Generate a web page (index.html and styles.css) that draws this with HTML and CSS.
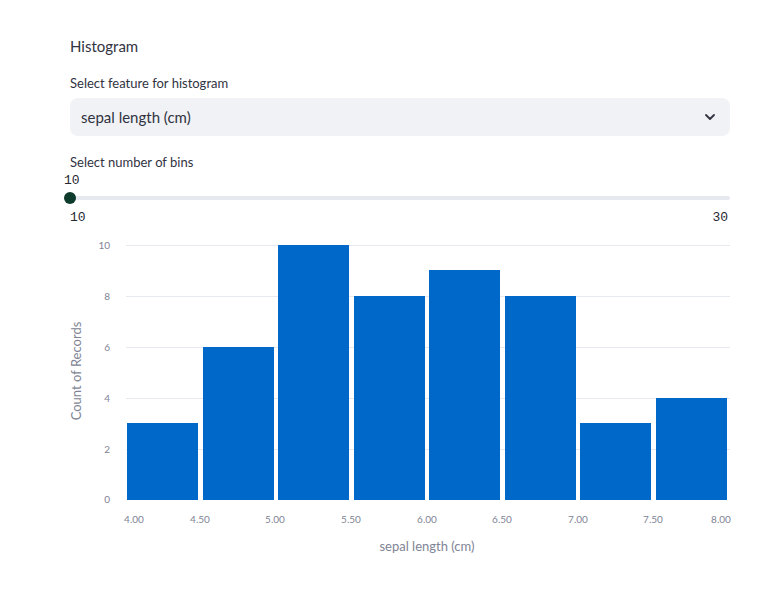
FILE: index.html
```html
<!DOCTYPE html>
<html>
<head>
<meta charset="utf-8">
<link rel="stylesheet" href="styles.css">
</head>
<body>
<main class="block">
  <div class="heading">Histogram</div>
  <div class="field">
    <div class="label">Select feature for histogram</div>
    <div class="select">
      <span>sepal length (cm)</span>
      <svg class="chev" width="12" height="8" viewBox="0 0 12 8"><path d="M2 2 L6 6 L10 2" fill="none" stroke="#31333f" stroke-width="1.8" stroke-linecap="round" stroke-linejoin="round"/></svg>
    </div>
  </div>
  <div class="field slider-field">
    <div class="label">Select number of bins</div>
    <div class="slider">
      <div class="value">10</div>
      <div class="track"><div class="thumb"></div></div>
      <div class="ends"><span>10</span><span>30</span></div>
    </div>
  </div>
  <svg class="chart" width="660" height="330" viewBox="0 0 660 330">
    <g class="grid" stroke="#e6e9ef" stroke-width="1">
      <line x1="56" x2="660" y1="13.5" y2="13.5"/>
      <line x1="56" x2="660" y1="64.5" y2="64.5"/>
      <line x1="56" x2="660" y1="115.5" y2="115.5"/>
      <line x1="56" x2="660" y1="166.5" y2="166.5"/>
      <line x1="56" x2="660" y1="217.5" y2="217.5"/>
    </g>
    <g class="yt" text-anchor="end">
      <text x="40" y="17">10</text>
      <text x="40" y="68">8</text>
      <text x="40" y="119">6</text>
      <text x="40" y="170">4</text>
      <text x="40" y="221">2</text>
      <text x="40" y="271">0</text>
    </g>
    <g fill="#0068c9">
      <rect x="57" y="191" width="71" height="77"/>
      <rect x="133" y="115" width="71" height="153"/>
      <rect x="208" y="13" width="71" height="255"/>
      <rect x="284" y="64" width="71" height="204"/>
      <rect x="359" y="38" width="71" height="230"/>
      <rect x="435" y="64" width="71" height="204"/>
      <rect x="510" y="191" width="71" height="77"/>
      <rect x="586" y="166" width="71" height="102"/>
    </g>
    <g class="xt" text-anchor="middle">
      <text x="64" y="291">4.00</text>
      <text x="130" y="291">4.50</text>
      <text x="205" y="291">5.00</text>
      <text x="281" y="291">5.50</text>
      <text x="357" y="291">6.00</text>
      <text x="432" y="291">6.50</text>
      <text x="508" y="291">7.00</text>
      <text x="583" y="291">7.50</text>
      <text x="651" y="291">8.00</text>
    </g>
    <text class="axt" x="357" y="319" text-anchor="middle">sepal length (cm)</text>
    <text class="axt" x="0" y="0" text-anchor="middle" transform="translate(11 139) rotate(-90)">Count of Records</text>
  </svg>
</main>
</body>
</html>
```
FILE: styles.css
```css
* { box-sizing: border-box; }
body {
  margin: 0;
  background: #fff;
  font-family: "Lato", "Noto Sans", sans-serif;
  color: #31333f;
}
.block {
  width: 660px;
  margin-left: 70px;
  padding-top: 36px;
  display: flex;
  flex-direction: column;
}
.heading {
  font-size: 15px;
  line-height: 20px;
  height: 20px;
}
.field {
  margin-top: 18px;
}
.label {
  font-size: 13px;
  line-height: 18px;
  height: 18px;
}
.select {
  margin-top: 6px;
  height: 38px;
  background: #f0f2f6;
  border-radius: 8px;
  display: flex;
  align-items: center;
  justify-content: space-between;
  padding: 0 14px 0 11px;
  font-size: 15px;
}
.slider-field { margin-top: 17px; }
.slider {
  display: flex;
  flex-direction: column;
}
.value, .ends {
  font-family: "Liberation Mono", "DejaVu Sans Mono", monospace;
  font-size: 13px;
  color: #262730;
}
.value {
  margin-left: -6px;
  line-height: 16px;
  height: 16px;
  margin-top: 2px;
}
.track {
  position: relative;
  margin-top: 7px;
  height: 4px;
  border-radius: 2px;
  background: #e6e9ef;
}
.thumb {
  position: absolute;
  left: -6px;
  top: -4px;
  width: 12px;
  height: 12px;
  border-radius: 50%;
  background: #0e3b2c;
}
.ends {
  margin-top: 10px;
  display: flex;
  justify-content: space-between;
  line-height: 16px;
  padding-right: 2px;
}
.chart {
  display: block;
  margin-top: 6px;
  overflow: visible;
}
.yt text, .xt text {
  font-family: "Lato", "Noto Sans", sans-serif;
  font-size: 10px;
  fill: #808495;
}
.axt {
  font-family: "Lato", "Noto Sans", sans-serif;
  font-size: 13px;
  fill: #808495;
}
```
